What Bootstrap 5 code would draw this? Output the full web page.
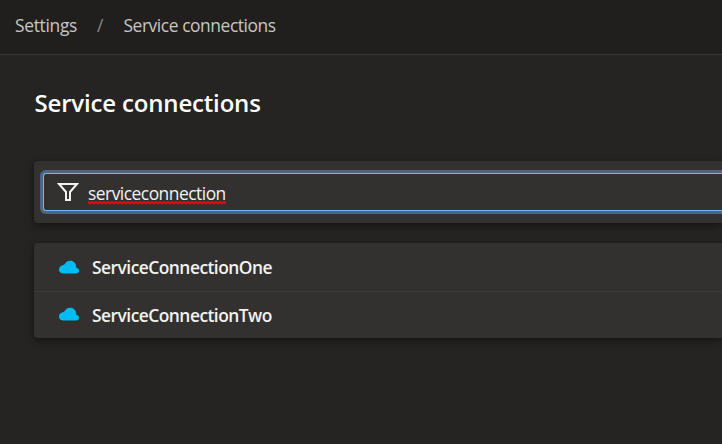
<!DOCTYPE html>
<html lang="en" data-bs-theme="dark">
<head>
<meta charset="utf-8">
<meta name="viewport" content="width=device-width, initial-scale=1">
<title>Service connections</title>
<link href="https://cdn.jsdelivr.net/npm/bootstrap@5.3.0/dist/css/bootstrap.min.css" rel="stylesheet">
<style>
body{background:#252423;color:#f3f2f1;font-family:"Segoe UI","Open Sans","Noto Sans",sans-serif;font-size:17.4px;line-height:24px;height:444px;white-space:nowrap}
.topbar{height:55px;background:#201f1e;border-bottom:1px solid #383736;color:#c8c6c4;padding:0 0 4px 15px}
.topbar .slash{color:#8a8886;margin:0 20px}
.page{padding:33px 0 0 34.5px}
.page-title{font-size:24px;font-weight:600;line-height:30px;color:#fff;margin:0 0 43px}
.panel{background:#323130;border-radius:4px 0 0 4px;box-shadow:0 3px 8px rgba(0,0,0,.42),0 0 2px rgba(0,0,0,.2);margin-left:-.5px}
.filter{height:62px;padding:12px 0 0 9px;margin-bottom:20px}
.filter-box{height:38px;border:1px solid #75b5fb;border-right:0;border-radius:3px 0 0 3px;box-shadow:0 0 0 3px #4f6683;padding-left:13px}
.filter-text{margin-left:9px;padding-top:2px;position:relative}
.squiggle{position:absolute;left:0;top:22px}
.conn{height:48px;padding-left:24px;font-weight:600}
.conn + .conn{height:47px;border-top:1px solid #3c3b3a}
.conn svg{margin-right:12px}
.conn + .conn svg{margin-bottom:2px}
.conn .t{margin-top:-1px}
.t{display:inline-block}
.t1{letter-spacing:-.3px}.t2{letter-spacing:-.43px}.t3{letter-spacing:-.17px}.t4{letter-spacing:-.5px}.t5{letter-spacing:-.52px}.t6{letter-spacing:-.52px}
</style>
</head>
<body class="overflow-hidden">
<nav class="topbar d-flex align-items-center">
<span class="t t1">Settings</span><span class="slash">/</span><span class="t t2">Service connections</span>
</nav>
<main class="page">
<h1 class="page-title"><span class="t t3">Service connections</span></h1>
<section class="panel filter">
<div class="filter-box d-flex align-items-center">
<svg width="22" height="20" viewBox="0 0 22 20" fill="none" stroke="#f3f2f1" stroke-width="2"><path d="M2 2H20L13 10V18H9V10Z"/></svg>
<div class="filter-text"><span class="t t4">serviceconnection</span>
<svg class="squiggle" width="138" height="4"><defs><pattern id="wave" width="4" height="4" patternUnits="userSpaceOnUse"><path d="M-1 0.8L0 .8L2 2.6L4 .8L5 .8" fill="none" stroke="#e60c0c" stroke-width="1.8"/></pattern></defs><rect width="138" height="4" fill="url(#wave)"/></svg></div>
</div>
</section>
<section class="panel">
<div class="conn d-flex align-items-center"><svg width="22" height="14" viewBox="0 0 22 14" fill="#00bcf2"><path d="M5 13.5C2.2 13.5 1 11.8 1 9.6C1 7.2 2.6 5.6 4.7 5.2C5.8 5 6.5 4.6 7.1 3.6C8.1 1.7 9.8.7 12.2.7C15.8.7 18 3.2 18 6.5C18 7.3 18.3 7.7 19 8C20.3 8.5 21 9.4 21 10.7C21 12.4 19.8 13.5 18 13.5Z"/></svg><span class="t t5">ServiceConnectionOne</span></div>
<div class="conn d-flex align-items-center"><svg width="22" height="14" viewBox="0 0 22 14" fill="#00bcf2"><path d="M5 13.5C2.2 13.5 1 11.8 1 9.6C1 7.2 2.6 5.6 4.7 5.2C5.8 5 6.5 4.6 7.1 3.6C8.1 1.7 9.8.7 12.2.7C15.8.7 18 3.2 18 6.5C18 7.3 18.3 7.7 19 8C20.3 8.5 21 9.4 21 10.7C21 12.4 19.8 13.5 18 13.5Z"/></svg><span class="t t6">ServiceConnectionTwo</span></div>
</section>
</main>
<script src="https://cdn.jsdelivr.net/npm/bootstrap@5.3.0/dist/js/bootstrap.bundle.min.js"></script>
</body>
</html>
